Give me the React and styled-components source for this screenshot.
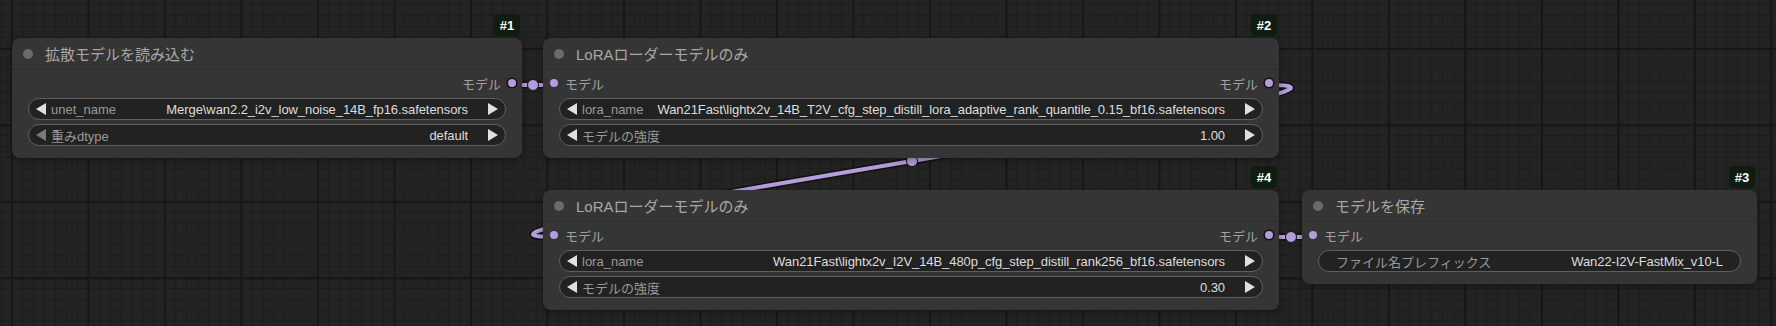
import React from 'react'
import styled, { createGlobalStyle } from 'styled-components'

const GlobalStyle = createGlobalStyle`
  html, body {
    margin: 0;
    padding: 0;
    background: #222;
  }
`

const FONT = `"Liberation Sans", "Noto Sans CJK JP", sans-serif`
const SLOT = '#b39ddb'

const Canvas = styled.div`
  position: relative;
  width: 1776px;
  height: 326px;
  overflow: hidden;
  font-family: ${FONT};
  background-color: #232323;
  background-image:
    linear-gradient(to right, #171717 2px, transparent 2px),
    linear-gradient(to bottom, #171717 2px, transparent 2px),
    linear-gradient(to right, #1c1c1c 1px, transparent 1px),
    linear-gradient(to bottom, #1c1c1c 1px, transparent 1px);
  background-size: 76.5px 76.5px, 76.5px 76.5px, 10.93px 10.93px, 10.93px 10.93px;
  background-position: 11px 48px, 11px 48px, 0.5px 4px, 0.5px 4px;
`

const LinkLayer = styled.svg`
  position: absolute;
  left: 0;
  top: 0;
  width: 1776px;
  height: 326px;
`

const Node = styled.div`
  position: absolute;
  left: ${p => p.$x}px;
  top: ${p => p.$y}px;
  width: ${p => p.$w}px;
  background: #353535;
  border-radius: 8px;
  box-shadow: 0 2px 6px rgba(0, 0, 0, 0.35);
`

const Badge = styled.div`
  position: absolute;
  right: 2px;
  top: -24px;
  height: 22px;
  min-width: 26px;
  padding: 0 4px;
  box-sizing: border-box;
  display: flex;
  align-items: center;
  justify-content: center;
  background: #0e1d0f;
  border-radius: 4px;
  color: #fff;
  font-weight: bold;
  font-size: 13px;
`

const Title = styled.div`
  height: 32px;
  display: flex;
  align-items: center;
  gap: 12px;
  padding-left: 11px;
  border-bottom: 1px solid #2c2c2c;
  box-sizing: border-box;
  color: #a8a8a8;
  font-size: 15px;
`

const TitleDot = styled.span`
  width: 10px;
  height: 10px;
  border-radius: 50%;
  background: #6b6b6b;
`

const SlotRow = styled.div`
  height: 28px;
  display: flex;
  align-items: center;
  justify-content: space-between;
`

const Slot = styled.div`
  display: flex;
  align-items: center;
  gap: 7px;
  color: #a0a0a0;
  font-size: 13px;
  padding: ${p => (p.$out ? '0 6px 0 0' : '0 0 0 7px')};
  margin-top: -2px;
`

const Dot = styled.span`
  width: 8px;
  height: 8px;
  border-radius: 50%;
  background: ${SLOT};
  box-shadow: ${p => (p.$linked ? '0 0 0 1.5px #111' : 'none')};
`

const Widgets = styled.div`
  display: flex;
  flex-direction: column;
  gap: 4px;
  padding: 0 16px 12px;
`

const Widget = styled.div`
  height: 22px;
  box-sizing: border-box;
  border: 1px solid #5e5e5e;
  border-radius: 11px;
  background: #222;
  display: flex;
  align-items: center;
  padding: ${p => (p.$text ? '0 17px 0 17px' : '0 7px 0 7px')};
  font-size: 13px;
  white-space: nowrap;
  overflow: hidden;
`

const Arrow = styled.span`
  flex: none;
  width: 10px;
  height: 12px;
  background: ${p => (p.$dim ? '#7a7a7a' : '#e0e0e0')};
  clip-path: ${p =>
    p.$right ? 'polygon(0 0, 100% 50%, 0 100%)' : 'polygon(100% 0, 0 50%, 100% 100%)'};
  margin: ${p => (p.$right ? '0 0 0 20px' : '0 5px 0 0')};
`

const Label = styled.span`
  flex: none;
  color: #999;
`

const Value = styled.span`
  flex: 1;
  min-width: 0;
  margin-left: 6px;
  text-align: right;
  color: #ddd;
  letter-spacing: -0.07px;
  overflow: hidden;
`

function Combo({ label, value, dim }) {
  return (
    <Widget>
      <Arrow $dim={dim} />
      <Label>{label}</Label>
      <Value>{value}</Value>
      <Arrow $right />
    </Widget>
  )
}

function TextField({ label, value }) {
  return (
    <Widget $text>
      <Label>{label}</Label>
      <Value>{value}</Value>
    </Widget>
  )
}

function GraphNode({ id, x, y, w, title, input, output, children }) {
  return (
    <Node $x={x} $y={y} $w={w}>
      <Badge>#{id}</Badge>
      <Title>
        <TitleDot />
        {title}
      </Title>
      <SlotRow>
        {input ? (
          <Slot>
            <Dot />
            {input}
          </Slot>
        ) : (
          <span />
        )}
        {output && (
          <Slot $out>
            {output}
            <Dot $linked />
          </Slot>
        )}
      </SlotRow>
      <Widgets>{children}</Widgets>
    </Node>
  )
}

function Link({ d }) {
  return (
    <g fill="none" strokeLinecap="round">
      <path d={d} stroke="#111" strokeWidth="7" />
      <path d={d} stroke={SLOT} strokeWidth="4" />
    </g>
  )
}

function Links() {
  const curve = 'M1270 85 C1453 85 371 237 554 237'
  return (
    <LinkLayer>
      <Link d="M512 85 L554 85" />
      <Link d={curve} />
      <Link d="M1270 237 L1312 237" />
      <g fill={SLOT} stroke="#111" strokeWidth="1">
        <circle cx="533" cy="85" r="5.5" />
        <circle cx="912" cy="161" r="5.5" />
        <circle cx="1291" cy="237" r="5.5" />
      </g>
    </LinkLayer>
  )
}

export default function App() {
  return (
    <>
      <GlobalStyle />
      <Canvas>
        <Links />
        <GraphNode id={1} x={12} y={38} w={510} title="拡散モデルを読み込む" output="モデル">
          <Combo label="unet_name" value="Merge\wan2.2_i2v_low_noise_14B_fp16.safetensors" />
          <Combo label="重みdtype" value="default" dim />
        </GraphNode>
        <GraphNode id={2} x={543} y={38} w={736} title="LoRAローダーモデルのみ" input="モデル" output="モデル">
          <Combo
            label="lora_name"
            value="Wan21Fast\lightx2v_14B_T2V_cfg_step_distill_lora_adaptive_rank_quantile_0.15_bf16.safetensors"
          />
          <Combo label="モデルの強度" value="1.00" />
        </GraphNode>
        <GraphNode id={4} x={543} y={190} w={736} title="LoRAローダーモデルのみ" input="モデル" output="モデル">
          <Combo
            label="lora_name"
            value="Wan21Fast\lightx2v_I2V_14B_480p_cfg_step_distill_rank256_bf16.safetensors"
          />
          <Combo label="モデルの強度" value="0.30" />
        </GraphNode>
        <GraphNode id={3} x={1302} y={190} w={455} title="モデルを保存" input="モデル">
          <TextField label="ファイル名プレフィックス" value="Wan22-I2V-FastMix_v10-L" />
        </GraphNode>
      </Canvas>
    </>
  )
}
